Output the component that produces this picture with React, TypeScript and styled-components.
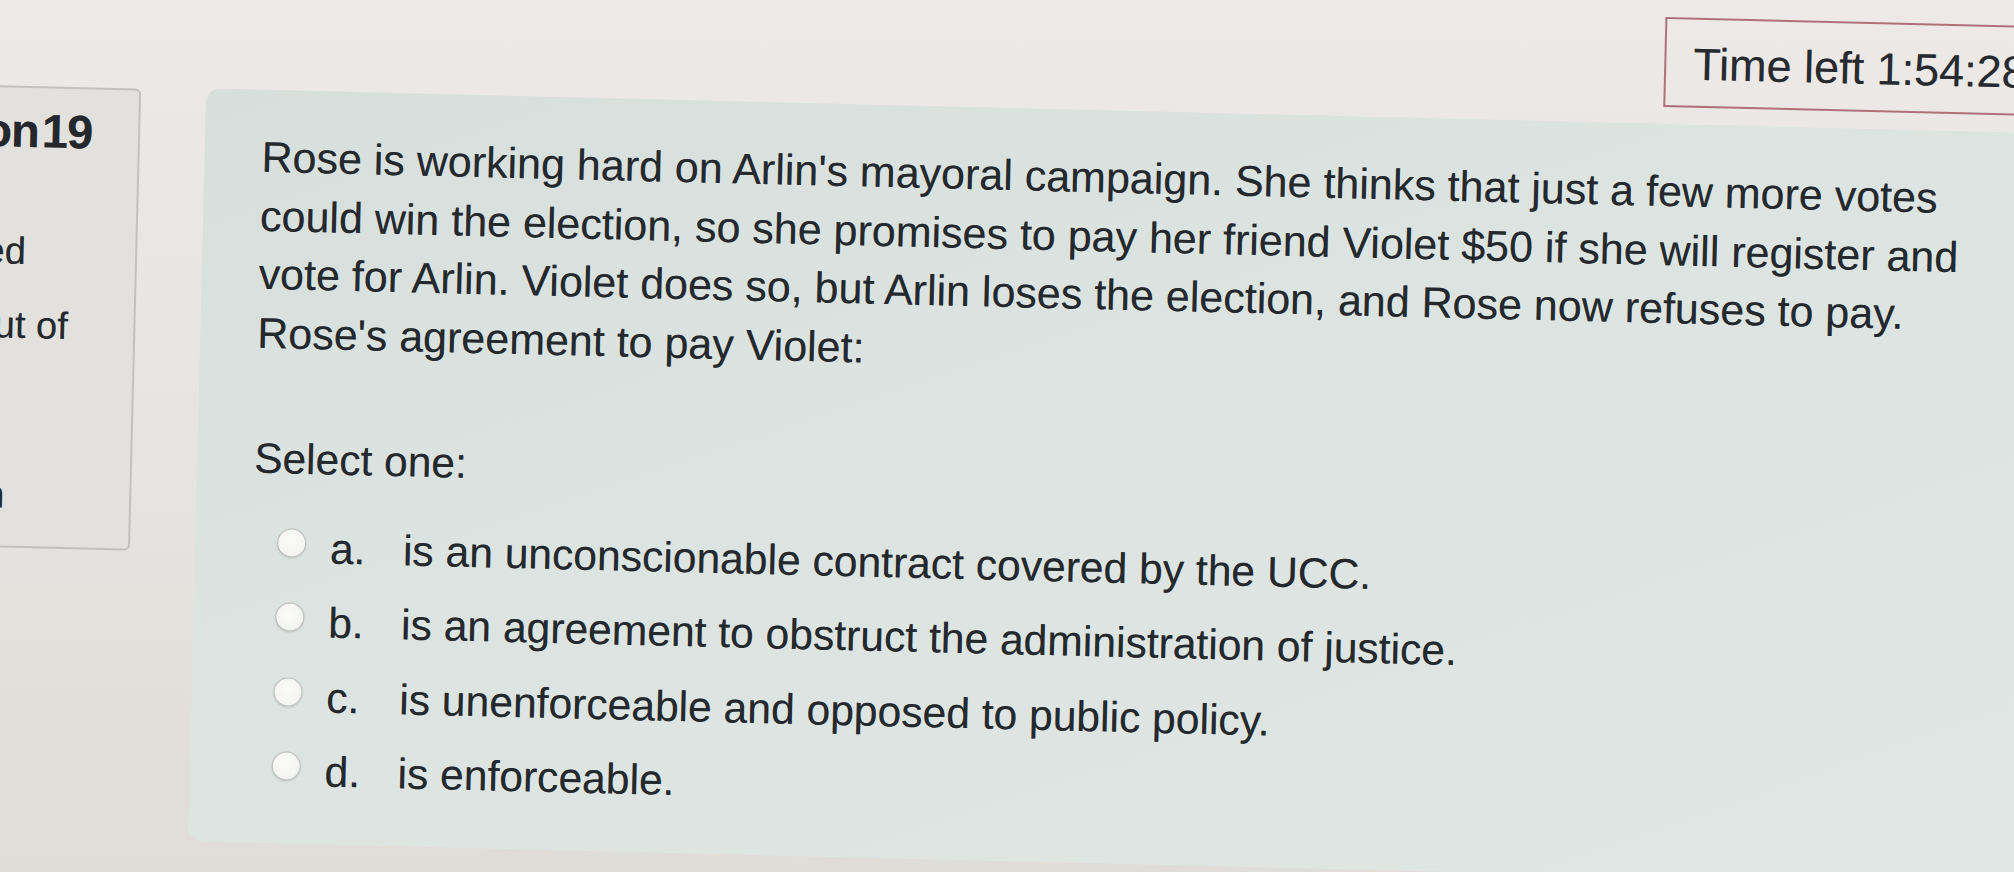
import React from "react";
import styled, { createGlobalStyle } from "styled-components";

const GlobalStyle = createGlobalStyle`
  html, body {
    margin: 0;
    padding: 0;
    width: 100%;
    height: 100%;
    overflow: hidden;
    background: linear-gradient(180deg, #ece9e7 0%, #e6e3e0 55%, #e0ddd8 100%);
  }
  body {
    font-family: "Liberation Sans", Arial, Helvetica, sans-serif;
    color: #24292e;
  }
  #root {
    width: 100%;
    height: 100%;
  }
`;

const answers = [
  { key: "a.", text: "is an unconscionable contract covered by the UCC." },
  { key: "b.", text: "is an agreement to obstruct the administration of justice." },
  { key: "c.", text: "is unenforceable and opposed to public policy." },
  { key: "d.", text: "is enforceable." },
];

function App() {
  return (
    <>
      <GlobalStyle />
      <Page>
        <InfoBox>
          <InfoHeading $left={234}>Question 19</InfoHeading>
          <InfoLine $left={124} $gap={69}>
            Not yet answered
          </InfoLine>
          <InfoLine $left={231} $gap={28}>
            Marked out of
            <br />
            1.00
          </InfoLine>
          <InfoLine $left={176} $gap={78}>
            Flag question
          </InfoLine>
        </InfoBox>

        <Main>
          <TimerBar>
            <TimerBox>Time left 1:54:28</TimerBox>
          </TimerBar>

          <Panel>
            <QuestionText>
              Rose is working hard on Arlin's mayoral campaign. She thinks that just a few more votes
              <br />
              could win the election, so she promises to pay her friend Violet $50 if she will register and
              <br />
              vote for Arlin. Violet does so, but Arlin loses the election, and Rose now refuses to pay.
              <br />
              Rose's agreement to pay Violet:
            </QuestionText>

            <Prompt>Select one:</Prompt>

            <OptionList>
              {answers.map((a) => (
                <OptionRow key={a.key}>
                  <Radio type="radio" name="q19" />
                  <OptionKey>{a.key}</OptionKey>
                  <OptionText>{a.text}</OptionText>
                </OptionRow>
              ))}
            </OptionList>
          </Panel>
        </Main>
      </Page>
    </>
  );
}

const Page = styled.div`
  display: flex;
  align-items: flex-start;
  width: 2014px;
  height: 872px;
  transform: rotate(1.4deg);
  transform-origin: 1007px 436px;
  text-shadow: 0 0 0.6px rgba(20, 24, 28, 0.5);
`;

const InfoBox = styled.aside`
  flex: none;
  box-sizing: border-box;
  width: 533px;
  height: 462px;
  margin-left: -400px;
  margin-top: 110px;
  padding-top: 15px;
  background: #e3e1dd;
  border: 2px solid #c4c1bd;
  border-radius: 0 6px 6px 0;
  white-space: nowrap;
`;

const InfoHeading = styled.h3<{ $left: number }>`
  margin: 0 0 0 ${(p) => p.$left}px;
  font-size: 47px;
  line-height: 56px;
  font-weight: 700;
  letter-spacing: -1px;
  word-spacing: -9px;
  color: #24282d;
`;

const InfoLine = styled.div<{ $left: number; $gap: number }>`
  margin: ${(p) => p.$gap}px 0 0 ${(p) => p.$left}px;
  font-size: 38px;
  line-height: 46px;
`;

const Main = styled.main`
  flex: none;
  display: flex;
  flex-direction: column;
  width: 1877px;
  margin-left: 65px;
`;

const TimerBar = styled.div`
  display: flex;
  justify-content: flex-end;
  margin-top: 1px;
`;

const TimerBox = styled.div`
  box-sizing: border-box;
  width: 420px;
  height: 90px;
  padding: 4px 0 0 27px;
  border: 2px solid #b0707a;
  font-size: 45px;
  line-height: 82px;
  white-space: nowrap;
  color: #272b30;
`;

const Panel = styled.section`
  box-sizing: border-box;
  height: 753px;
  margin-top: 17px;
  padding: 38px 0 0 57px;
  border-radius: 14px;
  background: linear-gradient(160deg, #d7dfdc 0%, #dce4e1 40%, #dfe6e3 100%);
`;

const QuestionText = styled.p`
  margin: 0;
  font-size: 43px;
  line-height: 58.7px;
  white-space: nowrap;
`;

const Prompt = styled.p`
  margin: 67px 0 0 0;
  font-size: 42.5px;
  line-height: 58.7px;
`;

const OptionList = styled.div`
  display: flex;
  flex-direction: column;
  margin-top: 21px;
  padding-left: 25px;
`;

const OptionRow = styled.label`
  display: flex;
  align-items: flex-start;
  height: 74.5px;
  font-size: 42.6px;
  line-height: 74.5px;
  white-space: nowrap;
`;

const Radio = styled.input`
  appearance: none;
  flex: none;
  box-sizing: border-box;
  width: 29px;
  height: 29px;
  margin: 18px 24px 0 0;
  border-radius: 50%;
  border: 1.5px solid #b9bcba;
  background: radial-gradient(circle at 45% 40%, #fbfbfa 0%, #f4f4f2 65%, #e6e7e5 100%);
  box-shadow: 0 1px 2px rgba(0, 0, 0, 0.12);
`;

const OptionKey = styled.span`
  flex: none;
  width: 73px;
`;

const OptionText = styled.span``;

export default App;
